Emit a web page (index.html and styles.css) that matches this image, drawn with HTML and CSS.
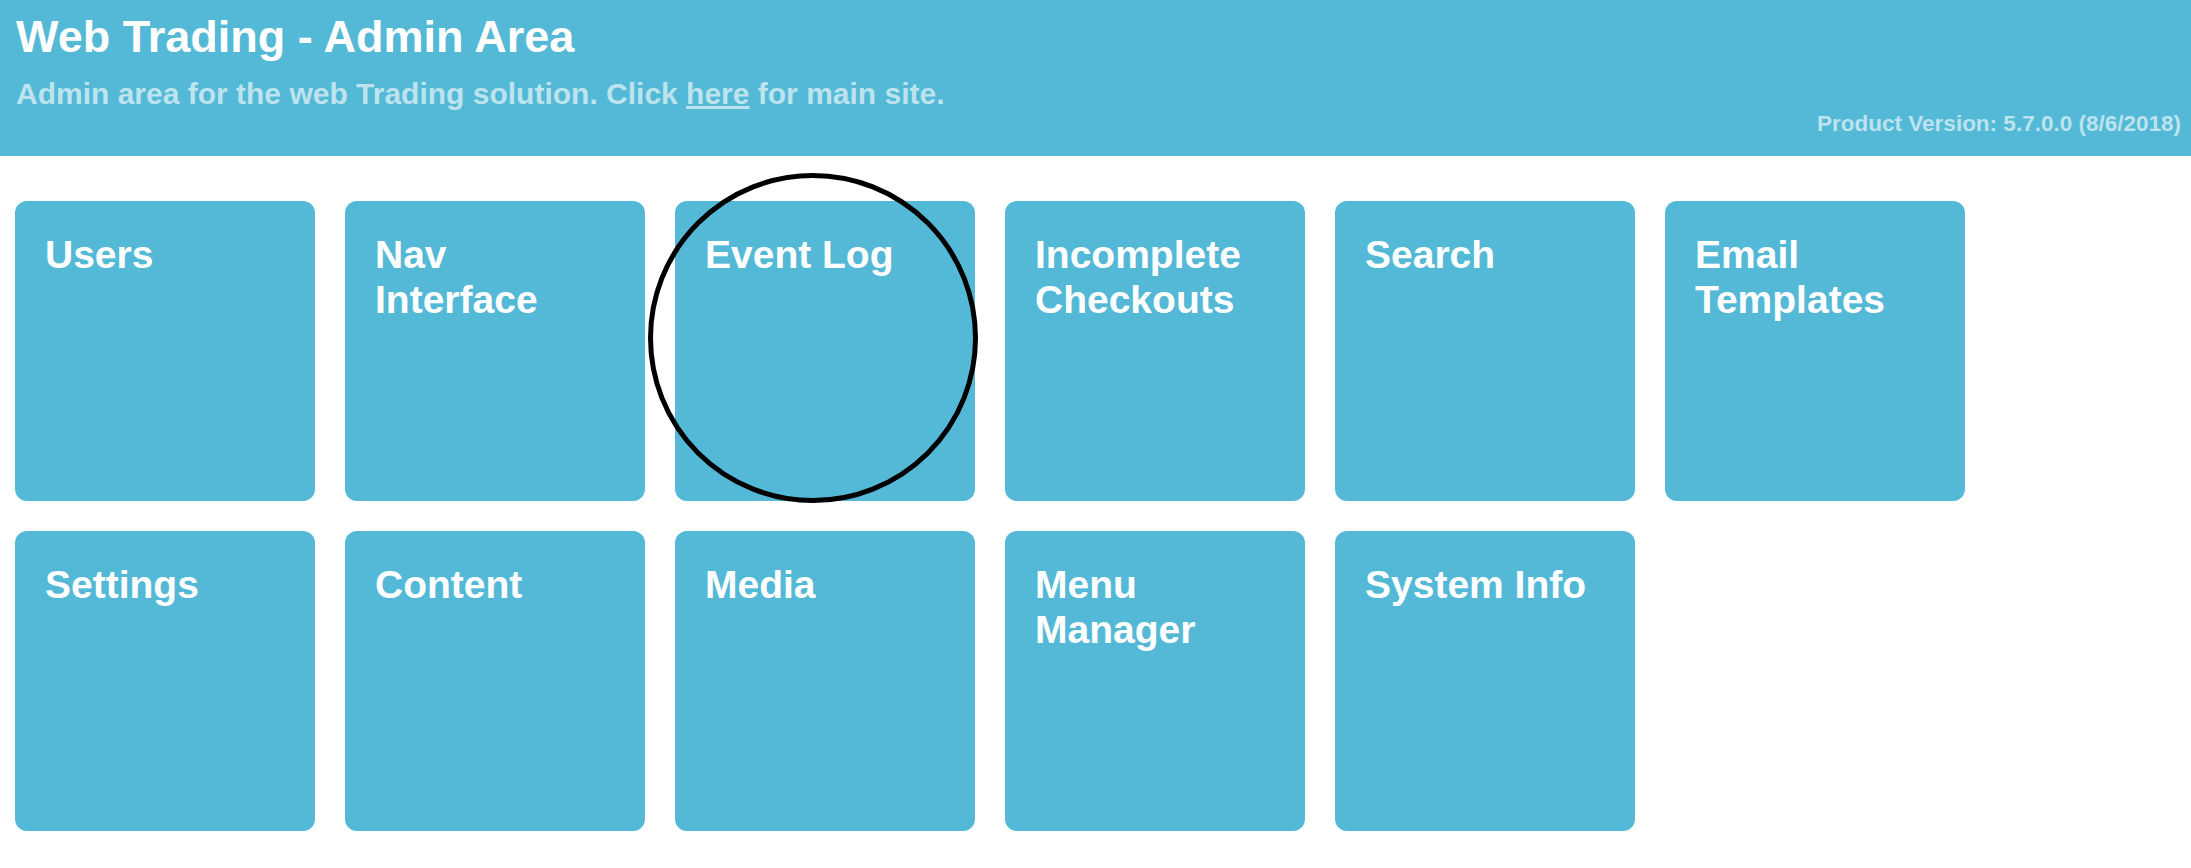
FILE: index.html
```html
<!DOCTYPE html>
<html>
<head>
<meta charset="utf-8">
<title>Web Trading - Admin Area</title>
<link rel="stylesheet" href="styles.css">
</head>
<body>
<header class="header">
  <h1 class="title">Web Trading - Admin Area</h1>
  <p class="subtitle">Admin area for the web Trading solution. Click <a href="#" class="sub-link">here</a> for main site.</p>
  <p class="version">Product Version: 5.7.0.0 (8/6/2018)</p>
</header>
<main class="main">
  <div class="tiles">
    <a href="#" class="tile"><span class="tile-label">Users</span></a>
    <a href="#" class="tile"><span class="tile-label">Nav Interface</span></a>
    <a href="#" class="tile"><span class="tile-label">Event Log</span></a>
    <a href="#" class="tile"><span class="tile-label">Incomplete Checkouts</span></a>
    <a href="#" class="tile"><span class="tile-label">Search</span></a>
    <a href="#" class="tile"><span class="tile-label">Email Templates</span></a>
    <a href="#" class="tile"><span class="tile-label">Settings</span></a>
    <a href="#" class="tile"><span class="tile-label">Content</span></a>
    <a href="#" class="tile"><span class="tile-label">Media</span></a>
    <a href="#" class="tile"><span class="tile-label">Menu Manager</span></a>
    <a href="#" class="tile"><span class="tile-label">System Info</span></a>
  </div>
  <div class="highlight-circle"></div>
</main>
</body>
</html>
```

FILE: styles.css
```css
html, body {
  margin: 0;
  padding: 0;
  background: #ffffff;
}

body {
  font-family: "Liberation Sans", Arial, sans-serif;
  font-weight: bold;
}

.header {
  background: #53b9d6;
  padding: 12px 10px 18px 16px;
  height: 156px;
  box-sizing: border-box;
}

.title {
  margin: 0;
  font-size: 45px;
  line-height: 50px;
  color: #ffffff;
  font-weight: bold;
}

.subtitle {
  margin: 15px 0 0 0;
  font-size: 30px;
  line-height: 34px;
  color: #bde3ee;
}

.sub-link {
  color: #bde3ee;
  text-decoration: underline;
}

.version {
  margin: -1px 0 0 0;
  font-size: 22.5px;
  line-height: 28px;
  text-align: right;
  color: #bde3ee;
}

.main {
  position: relative;
  padding: 45px 15px 0 15px;
}

.tiles {
  display: grid;
  grid-template-columns: repeat(6, 300px);
  grid-auto-rows: 300px;
  gap: 30px;
}

.tile {
  display: block;
  background: #53b9d6;
  border-radius: 12px;
  padding: 31px 40px 0 30px;
  box-sizing: border-box;
  text-decoration: none;
}

.tile-label {
  display: block;
  color: #ffffff;
  font-size: 39px;
  line-height: 45px;
  font-weight: bold;
}

.highlight-circle {
  position: absolute;
  left: 648px;
  top: 17px;
  width: 330px;
  height: 330px;
  border: 5px solid #000000;
  border-radius: 50%;
  box-sizing: border-box;
  pointer-events: none;
}
```
